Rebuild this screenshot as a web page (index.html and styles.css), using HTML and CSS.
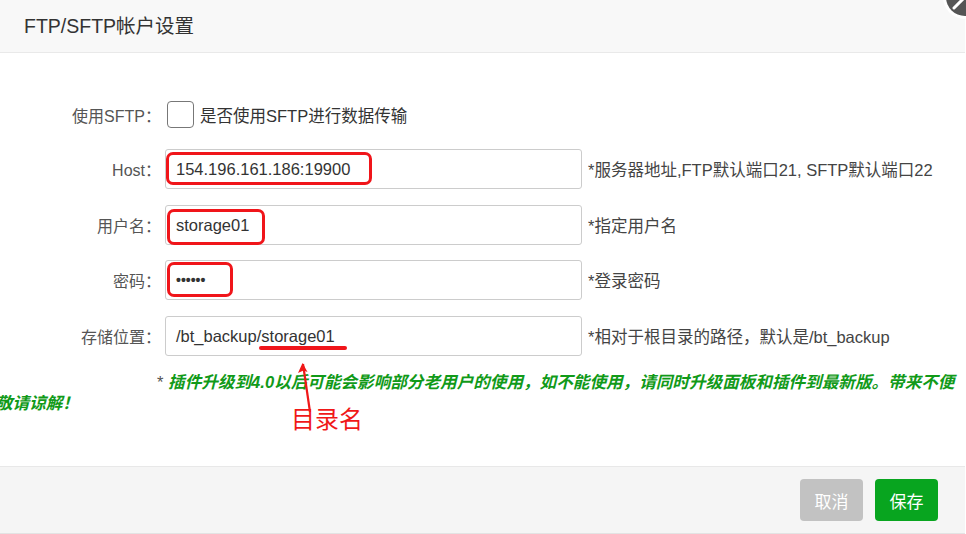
FILE: index.html
```html
<!DOCTYPE html>
<html lang="zh-CN">
<head>
<meta charset="utf-8">
<title>FTP/SFTP帐户设置</title>
<link rel="stylesheet" href="styles.css">
</head>
<body>
<div class="dialog">
  <div class="close-btn"><svg class="close-ico" viewBox="0 0 38 38" width="38" height="38"><path d="M8 30 L20 18" stroke="#fff" stroke-width="3" stroke-linecap="round"/></svg></div>
  <div class="header">FTP/SFTP帐户设置</div>
  <div class="body">
    <div class="row row-check">
      <div class="label">使用SFTP：</div>
      <span class="checkbox"></span>
      <span class="check-text">是否使用SFTP进行数据传输</span>
    </div>
    <div class="row">
      <div class="label">Host：</div>
      <div class="field">
        <div class="input">154.196.161.186:19900</div>
        <span class="mark mark-host"></span>
      </div>
      <div class="hint">*服务器地址,FTP默认端口21, SFTP默认端口22</div>
    </div>
    <div class="row">
      <div class="label">用户名：</div>
      <div class="field">
        <div class="input">storage01</div>
        <span class="mark mark-user"></span>
      </div>
      <div class="hint">*指定用户名</div>
    </div>
    <div class="row">
      <div class="label">密码：</div>
      <div class="field">
        <div class="input pw">••••••</div>
        <span class="mark mark-pw"></span>
      </div>
      <div class="hint">*登录密码</div>
    </div>
    <div class="row">
      <div class="label">存储位置：</div>
      <div class="field">
        <div class="input">/bt_backup/storage01</div>
        <span class="underline"></span>
      </div>
      <div class="hint">*相对于根目录的路径，默认是/bt_backup</div>
    </div>
    <p class="note"><span class="star">*</span> 插件升级到4.0以后可能会影响部分老用户的使用，如不能使用，请同时升级面板和插件到最新版。带来不便<br>敬请谅解！</p>
    <svg class="arrow" viewBox="0 0 30 60" width="30" height="60"><path d="M14 4 L21 52" stroke="#f01818" stroke-width="2.2" fill="none"/><path d="M13.5 3 L9 13 L14.5 10.5 L18.5 12 Z" fill="#f01818"/></svg>
    <div class="anno-text">目录名</div>
  </div>
  <div class="footer">
    <button class="btn btn-cancel">取消</button>
    <button class="btn btn-save">保存</button>
  </div>
</div>
</body>
</html>
```
FILE: styles.css
```css
html, body {
  margin: 0;
  padding: 0;
  background: #fff;
  overflow: hidden;
}
body {
  width: 966px;
  height: 534px;
  font-family: "Liberation Sans", "Noto Sans CJK SC", sans-serif;
  color: #333;
}
.dialog {
  position: relative;
  width: 965px;
  height: 534px;
  background: #fff;
}
.close-btn {
  position: absolute;
  left: 946px;
  top: -22px;
  width: 38px;
  height: 38px;
  border-radius: 50%;
  background: #555;
  box-shadow: 0 0 0 3px #fff;
  z-index: 3;
}
.close-ico {
  display: block;
}
.header {
  height: 52px;
  line-height: 52px;
  background: #f8f8f8;
  border-bottom: 1px solid #e9e9e9;
  padding-left: 24px;
  font-size: 19.5px;
  color: #333;
}
.body {
  position: relative;
  height: 413px;
  padding-top: 48px;
  box-sizing: border-box;
}
.row {
  display: flex;
  align-items: center;
  height: 40px;
  margin-bottom: 15.6px;
}
.row-check {
  height: 27px;
  margin-bottom: 21px;
}
.label {
  flex: none;
  width: 161px;
  text-align: right;
  font-size: 16px;
  color: #555;
}
.checkbox {
  flex: none;
  width: 27px;
  height: 27px;
  box-sizing: border-box;
  margin-left: 6px;
  border: 1px solid #777;
  border-radius: 4px;
  background: #fff;
}
.check-text {
  margin-left: 6px;
  font-size: 16.5px;
  color: #333;
}
.field {
  position: relative;
  flex: none;
  width: 417px;
  height: 40px;
  margin-left: 4px;
}
.input {
  box-sizing: border-box;
  height: 40px;
  line-height: 38px;
  border: 1px solid #ccc;
  border-radius: 3px;
  padding-left: 10px;
  font-size: 16.5px;
  color: #333;
  background: #fff;
}
.input.pw {
  font-size: 14px;
  font-weight: bold;
  letter-spacing: 0;
}
.hint {
  margin-left: 6px;
  font-size: 16.5px;
  color: #444;
  white-space: nowrap;
}
.mark {
  position: absolute;
  box-sizing: border-box;
  border: 3px solid #f0151a;
  border-radius: 7px;
}
.mark-host {
  left: 1px;
  top: 3px;
  width: 206px;
  height: 33px;
}
.mark-user {
  left: 2px;
  top: 4px;
  width: 98px;
  height: 36px;
}
.mark-pw {
  left: 2px;
  top: 2px;
  width: 66px;
  height: 35px;
}
.underline {
  position: absolute;
  left: 94px;
  top: 30px;
  width: 88px;
  height: 4px;
  border-radius: 2px;
  background: #f0151a;
}
.note {
  margin: 0 0 0 -4px;
  padding-top: 1px;
  text-indent: 161px;
  font-size: 16.6px;
  line-height: 21px;
  font-style: italic;
  font-weight: bold;
  color: #119a19;
  white-space: nowrap;
}
.star {
  font-style: normal;
  font-weight: normal;
  color: #555;
}
.arrow {
  position: absolute;
  left: 289px;
  top: 307px;
}
.anno-text {
  position: absolute;
  left: 291px;
  top: 354px;
  font-size: 24px;
  line-height: 26px;
  color: #f01818;
}
.footer {
  display: flex;
  justify-content: flex-end;
  align-items: flex-start;
  gap: 12px;
  height: 68px;
  box-sizing: border-box;
  padding: 12px 27px 0 0;
  background: #f5f5f5;
  border-top: 1px solid #e8e8e8;
  border-bottom: 1px solid #e3e3e3;
}
.btn {
  width: 63px;
  height: 42px;
  border: none;
  border-radius: 4px;
  font-family: "Liberation Sans", "Noto Sans CJK SC", sans-serif;
  font-size: 17px;
  color: #fff;
  padding: 0;
}
.btn-cancel {
  background: #c2c2c2;
}
.btn-save {
  background: #08a51f;
}
```
